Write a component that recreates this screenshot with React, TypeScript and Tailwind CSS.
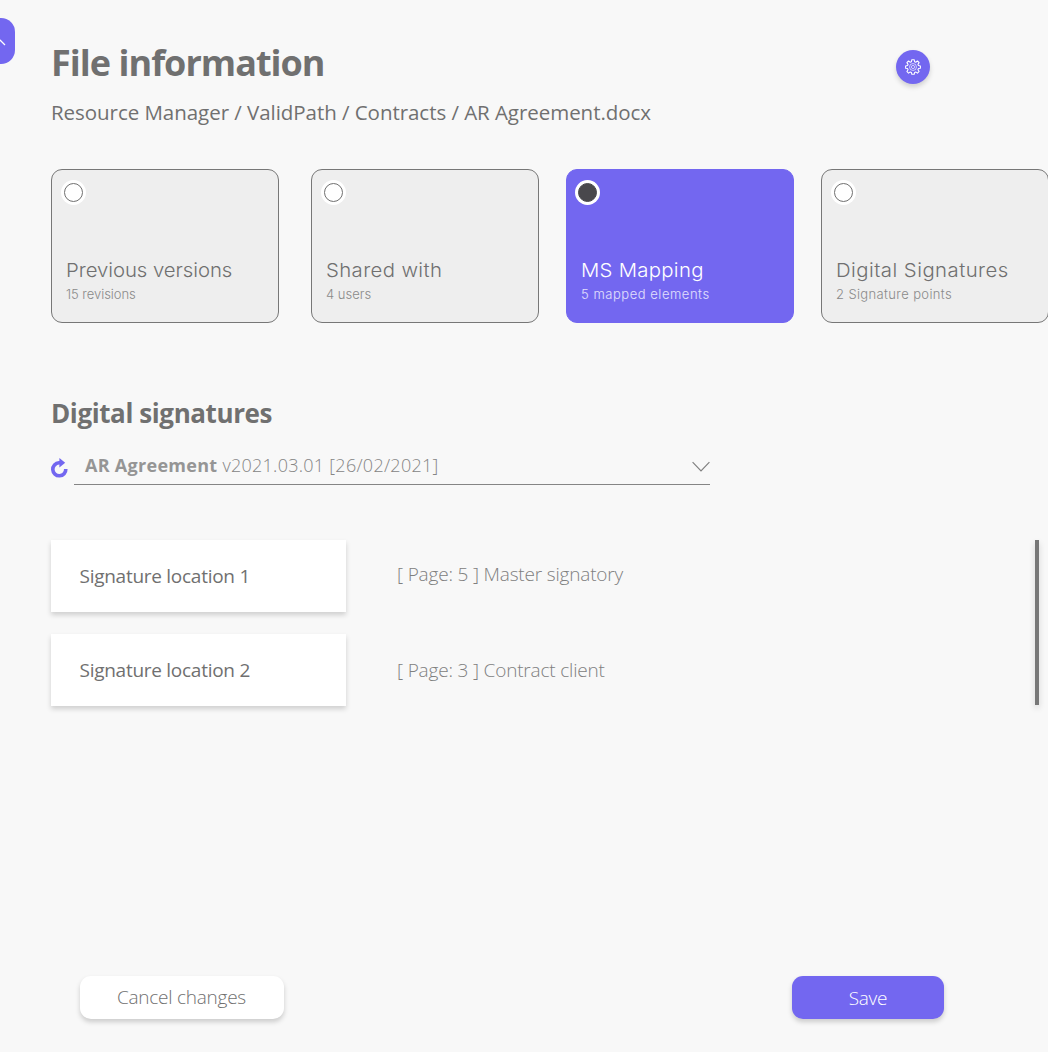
import clsx from "clsx";

type Option = { title: string; note: string; titleTrack: string; noteTrack: string; gap: string; active?: boolean };

const options: Option[] = [
  { title: "Previous versions", note: "15 revisions", titleTrack: "tracking-[-0.05px]", noteTrack: "tracking-[-0.05px]", gap: "" },
  { title: "Shared with", note: "4 users", titleTrack: "tracking-[0.36px]", noteTrack: "tracking-normal", gap: "ml-8" },
  { title: "MS Mapping", note: "5 mapped elements", titleTrack: "tracking-[0.27px]", noteTrack: "tracking-[0.53px]", gap: "ml-[27px]", active: true },
  { title: "Digital Signatures", note: "2 Signature points", titleTrack: "tracking-[0.43px]", noteTrack: "tracking-[0.37px]", gap: "ml-[27px]" },
];

const signatures = [
  { name: "Signature location 1", detail: "[ Page: 5 ] Master signatory", lift: "pb-[4px]" },
  { name: "Signature location 2", detail: "[ Page: 3 ] Contract client", lift: "" },
];

function GearIcon() {
  return (
    <svg viewBox="0 0 24 24" className="size-4" fill="none" stroke="white" strokeLinejoin="round">
      <path
        strokeWidth="1.6"
        d="M10.2 1h3.6l.6 3.1 1.7.7 2.6-1.8 2.5 2.5-1.8 2.6.7 1.7 3 .6v3.4l-3 .6-.7 1.7 1.8 2.6-2.5 2.5-2.6-1.8-1.7.7-.6 2.9h-3.6l-.6-2.9-1.7-.7-2.6 1.8-2.5-2.5 1.8-2.6-.7-1.7-3-.6v-3.4l3-.6.7-1.7-1.8-2.6 2.5-2.5 2.6 1.8 1.7-.7z"
      />
      <circle cx="12" cy="12" r="5.2" strokeWidth="1" />
      <circle cx="12" cy="12" r="2.4" strokeWidth="1" />
    </svg>
  );
}

function RefreshIcon() {
  return (
    <svg viewBox="0 0 18 20" className="mt-[5px] -ml-px h-5 w-[18px] shrink-0">
      <path d="M10.5 4.8H9A6.5 6.5 0 1 0 15.8 11" fill="none" stroke="#7367F0" strokeWidth="3.6" />
      <path d="M9.4 0 15.2 4.8 9.4 9.4z" fill="#7367F0" />
    </svg>
  );
}

function OptionCard({ title, note, titleTrack, noteTrack, gap, active }: Option) {
  return (
    <button
      className={clsx(
        "flex h-[154px] w-[228px] shrink-0 flex-col items-start rounded-[11px] border pl-[14px] text-left font-['Inter',sans-serif] font-light",
        gap,
        active ? "border-[#7367F0] bg-[#7367F0] text-white" : "border-[#777] bg-[#EEEEEE] text-[#707070]",
      )}
    >
      <span
        className={clsx("mt-[10px] flex size-[25px] items-center justify-center rounded-full bg-white", active ? "-ml-[6px]" : "-ml-[5px]")}
      >
        <span className={clsx("size-[19px] rounded-full border", active ? "border-[#49484C] bg-[#49484C]" : "border-[#707070]")} />
      </span>
      <span className={clsx("mt-[53.5px] origin-left scale-x-107 text-[19px] leading-6 whitespace-nowrap", titleTrack)}>{title}</span>
      <span className={clsx("mt-[3.5px] text-[13px] leading-4 whitespace-nowrap", noteTrack, active ? "text-white/80" : "text-[#8a8a8a]")}>{note}</span>
    </button>
  );
}

export default function App() {
  return (
    <div className="relative flex h-[1052px] w-[1048px] flex-col overflow-hidden bg-[#F8F8F8] pl-[51px] font-['Open_Sans',sans-serif] text-[#707070]">
      <button className="absolute top-[18px] -left-[31px] h-[46px] w-[46px] rounded-[14px] bg-[#7367F0]">
        <svg viewBox="0 0 46 46" className="size-full" fill="none" stroke="white" strokeWidth="1.3">
          <path d="M26 27l5-5.4M31 22l5 5" />
        </svg>
      </button>

      <header className="flex justify-between pt-[42.5px] pr-[118px]">
        <div>
          <h1 className="text-[36px] leading-10 font-bold tracking-[-0.98px] whitespace-nowrap">File information</h1>
          <p className="mt-[15.5px] text-[20.5px] leading-7 tracking-[-0.045px] whitespace-nowrap">
            Resource Manager / ValidPath / Contracts / AR Agreement.docx
          </p>
        </div>
        <button className="mt-[7.5px] flex size-[34px] items-center justify-center rounded-full bg-[#7367F0] shadow-[0_3px_5px_rgba(0,0,0,0.16)]">
          <GearIcon />
        </button>
      </header>

      <section className="mt-[43.4px] flex">
        {options.map((o) => (
          <OptionCard key={o.title} {...o} />
        ))}
      </section>

      <h2 className="mt-[73.6px] text-[26px] leading-8 font-bold tracking-[-0.4px]">Digital signatures</h2>

      <div className="mt-6 flex w-[659px]">
        <RefreshIcon />
        <div className="ml-[6px] flex h-[32px] flex-1 justify-between border-b border-[#858585] pl-[11px] text-[18px] leading-6 text-[#909090]">
          <span className="font-light text-[#858585]">
            <b className="font-bold tracking-[0.29px] text-[#959595]">AR Agreement</b>
            <span className="tracking-[0.27px]"> v2021.03.01 [26/02/2021]</span>
          </span>
          <svg viewBox="0 0 18 12" className="mt-[8px] h-3 w-[18px]" fill="none" stroke="#808080" strokeWidth="1.2">
            <path d="M.6 1.2 9 9.8l8.4-8.6" />
          </svg>
        </div>
      </div>

      <div className="mt-[55px] flex justify-between pr-[9px]">
        <div className="flex flex-col gap-[22px]">
          {signatures.map((s) => (
            <div key={s.name} className="flex h-[72px] items-center">
              <div className="flex h-full w-[295px] items-center bg-white pl-[28.5px] text-[19px] tracking-[-0.27px] shadow-[0_3px_5px_rgba(0,0,0,0.17)]">
                {s.name}
              </div>
              <div className={clsx("ml-[51px] text-[19px] font-light tracking-[-0.18px] text-[#808080]", s.lift)}>{s.detail}</div>
            </div>
          ))}
        </div>
        <div className="h-[165px] w-1 bg-[#777] shadow-[0_3px_6px_rgba(0,0,0,0.16)]" />
      </div>

      <footer className="mt-auto mb-[33px] flex justify-between pr-[104px] pl-[29px] text-[19px] font-light tracking-[-0.25px]">
        <button className="h-[43px] w-[204px] rounded-[11px] bg-white pr-px pb-px shadow-[0_3px_5px_rgba(0,0,0,0.18)]">Cancel changes</button>
        <button className="h-[43px] w-[152px] rounded-[11px] bg-[#7367F0] pt-px text-white shadow-[0_3px_5px_rgba(0,0,0,0.18)]">Save</button>
      </footer>
    </div>
  );
}
